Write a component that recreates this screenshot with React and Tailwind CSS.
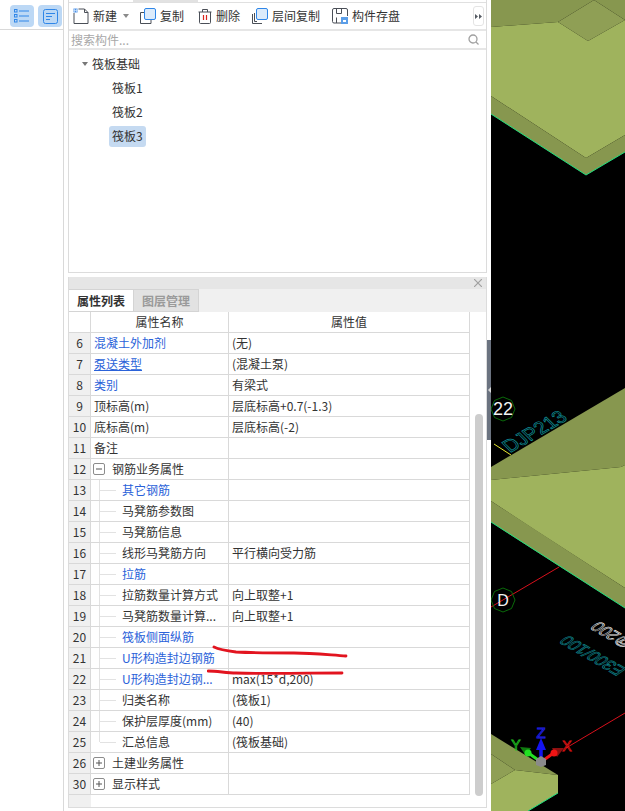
import React from 'react';

const ROWS = [
  { no: 6, name: '混凝土外加剂', value: '(无)', link: true },
  { no: 7, name: '泵送类型', value: '(混凝土泵)', link: true, underline: true },
  { no: 8, name: '类别', value: '有梁式', link: true },
  { no: 9, name: '顶标高(m)', value: '层底标高+0.7(-1.3)' },
  { no: 10, name: '底标高(m)', value: '层底标高(-2)' },
  { no: 11, name: '备注', value: '' },
  { no: 12, name: '钢筋业务属性', value: '', toggle: '-' },
  { no: 13, name: '其它钢筋', value: '', link: true, child: true },
  { no: 14, name: '马凳筋参数图', value: '', child: true },
  { no: 15, name: '马凳筋信息', value: '', child: true },
  { no: 16, name: '线形马凳筋方向', value: '平行横向受力筋', child: true },
  { no: 17, name: '拉筋', value: '', link: true, child: true },
  { no: 18, name: '拉筋数量计算方式', value: '向上取整+1', child: true },
  { no: 19, name: '马凳筋数量计算...', value: '向上取整+1', child: true },
  { no: 20, name: '筏板侧面纵筋', value: '', link: true, child: true },
  { no: 21, name: 'U形构造封边钢筋', value: '', link: true, child: true },
  { no: 22, name: 'U形构造封边钢...', value: 'max(15*d,200)', link: true, child: true },
  { no: 23, name: '归类名称', value: '(筏板1)', child: true },
  { no: 24, name: '保护层厚度(mm)', value: '(40)', child: true },
  { no: 25, name: '汇总信息', value: '(筏板基础)', child: true, last: true },
  { no: 26, name: '土建业务属性', value: '', toggle: '+' },
  { no: 30, name: '显示样式', value: '', toggle: '+' },
];

const ListIcon = () => (
  <svg width="16" height="14" viewBox="0 0 16 14" fill="none" stroke="#2f86e8" strokeWidth="1">
    <rect x="0.5" y="0.5" width="2.5" height="2.5" />
    <rect x="0.5" y="5.5" width="2.5" height="2.5" />
    <rect x="0.5" y="10.5" width="2.5" height="2.5" />
    <path d="M5 2h10M5 7h10M5 12h10" />
  </svg>
);

const FormIcon = () => (
  <svg width="15" height="15" viewBox="0 0 15 15" fill="none" stroke="#2f86e8" strokeWidth="1">
    <rect x="0.5" y="0.5" width="14" height="14" rx="2" />
    <path d="M3 4.5h9M3 7.5h6M3 10.5h4" />
  </svg>
);

const NewIcon = () => (
  <svg width="16" height="16" viewBox="0 0 16 16" fill="none">
    <path d="M1 5v10.5h14V4.5L11.5 1H5.5" stroke="#4a4f57" strokeWidth="1" />
    <path d="M11.5 1v3.5H15" stroke="#4a4f57" strokeWidth="1" />
    <rect x="0.5" y="0.5" width="4" height="4" fill="#4a90e8" />
    <path d="M1.5 0.5v4M3.5 0.5v4M0.5 2.5h4" stroke="#cfe2f8" strokeWidth="0.7" />
  </svg>
);

const CopyIcon = ({ small }) => (
  <svg width="16" height="16" viewBox="0 0 16 16" fill="none">
    {small && <path d="M0.5 6v9.5H10M2.5 5v8.5H5" stroke="#4a4f57" strokeWidth="1" />}
    {!small && <path d="M4 4.5H0.5v11h10.5V12" stroke="#4a4f57" strokeWidth="1" />}
    <rect x="4.5" y="0.5" width="11" height="11" rx="1.5" fill="#dcebfb" stroke="#2f86e8" strokeWidth="1" />
  </svg>
);

const TrashIcon = () => (
  <svg width="14" height="15" viewBox="0 0 14 15" fill="none">
    <path d="M0.5 3h13M4.5 3V0.5h5V3M1.5 3v10.5a1 1 0 0 0 1 1h9a1 1 0 0 0 1-1V3" stroke="#4a4f57" strokeWidth="1" />
    <path d="M5.5 6v5M8.5 6v5" stroke="#d9251d" strokeWidth="1.2" />
  </svg>
);

const SaveIcon = () => (
  <svg width="16" height="16" viewBox="0 0 16 16" fill="none">
    <path d="M9 15H2a1.500 1.500 0 0 1-1.500-1.500V2A1.500 1.500 0 0 1 2 .5h12A1.500 1.500 0 0 1 15.500 2v6" stroke="#4a4f57" strokeWidth="1" />
    <path d="M4.500 .5v5h5V.5M4.500 15V9.500" stroke="#4a4f57" strokeWidth="1" />
    <rect x="9" y="9" width="7" height="7" fill="#5b9ee8" />
    <rect x="11" y="12" width="3" height="2" fill="#ffffff" />
  </svg>
);

const ToolButton = ({ icon, label, className }) => (
  <div className={`flex items-center gap-[4px] ${className}`}>
    {icon}
    <span>{label}</span>
  </div>
);

const Toolbar = () => (
  <div className="flex h-[28px] items-center border-b-2 border-[#e6e6e6] pl-[4px] pr-[2px]">
    <ToolButton icon={<NewIcon />} label="新建" />
    <svg width="6" height="4" viewBox="0 0 6 4" className="ml-[6px]">
      <path d="M0 0h6L3 4z" fill="#8a8a8a" />
    </svg>
    <ToolButton icon={<CopyIcon />} label="复制" className="ml-[11px]" />
    <ToolButton icon={<TrashIcon />} label="删除" className="ml-[14px]" />
    <ToolButton icon={<CopyIcon small />} label="层间复制" className="ml-[12px]" />
    <ToolButton icon={<SaveIcon />} label="构件存盘" className="ml-[12px]" />
    <div className="ml-auto flex h-[20px] w-[11px] items-center justify-center rounded-[3px] border border-[#e4e4e4]">
      <svg width="7" height="5" viewBox="0 0 7 5">
        <path d="M0 0l3 2.500L0 5zM4 0l3 2.500L4 5z" fill="#555b63" />
      </svg>
    </div>
  </div>
);

const SearchBar = () => (
  <div className="flex h-[19px] items-center justify-between border-b-2 border-[#e6e6e6] pl-[2px] pr-[7px] text-[#a8a8a8]">
    <span>搜索构件...</span>
    <svg width="11" height="11" viewBox="0 0 11 11" fill="none" stroke="#a0a0a0" strokeWidth="1.300">
      <circle cx="5" cy="5" r="4" />
      <path d="M8 8l2.500 2.500" />
    </svg>
  </div>
);

const TreeItem = ({ label, selected }) => (
  <div className="flex h-[24px] items-center pl-[40px]">
    <span className={`flex h-[21px] items-center rounded-[3px] px-[3px] ${selected ? 'bg-[#c5daf1]' : ''}`}>{label}</span>
  </div>
);

const ComponentTree = () => (
  <div className="pt-[2px]">
    <div className="flex h-[24px] items-center pl-[13px]">
      <svg width="6" height="4" viewBox="0 0 6 4" className="mr-[4px]">
        <path d="M0 0h6L3 4z" fill="#777777" />
      </svg>
      <span>筏板基础</span>
    </div>
    <TreeItem label="筏板1" />
    <TreeItem label="筏板2" />
    <TreeItem label="筏板3" selected />
  </div>
);

const NameCell = ({ row }) => {
  const color = row.link ? 'text-[#2a62d9]' : 'text-[#333333]';
  const deco = row.underline ? 'underline' : '';
  return (
    <div className={`flex w-[138px] items-center border-r border-[#d9d9d9] ${color}`}>
      {row.child && (
        <>
          <span className={`ml-[8px] w-px bg-[#e2e2e2] ${row.last ? 'h-[10px] self-start' : 'self-stretch'}`} />
          <span className="h-px w-[16px] bg-[#e2e2e2]" />
          <span className={`ml-[6px] whitespace-nowrap ${deco}`}>{row.name}</span>
        </>
      )}
      {row.toggle && (
        <>
          <span className="ml-[2px] flex h-[12px] w-[12px] items-center justify-center rounded-[2px] border border-[#8c8c8c]">
            <svg width="6" height="6" viewBox="0 0 6 6" stroke="#555555" strokeWidth="1">
              <path d="M0 3h6" />
              {row.toggle === '+' && <path d="M3 0v6" />}
            </svg>
          </span>
          <span className="ml-[7px] whitespace-nowrap">{row.name}</span>
        </>
      )}
      {!row.child && !row.toggle && <span className={`ml-[3px] whitespace-nowrap ${deco}`}>{row.name}</span>}
    </div>
  );
};

const PropertyRow = ({ row }) => (
  <div className="flex h-[21px] border-b border-[#d9d9d9]">
    <div className="flex w-[22px] items-center justify-center border-r border-[#d9d9d9] bg-[#f0f0f0]">{row.no}</div>
    <NameCell row={row} />
    <div className="flex w-[241px] items-center whitespace-nowrap border-r border-[#d9d9d9] pl-[3px]">{row.value}</div>
  </div>
);

const PropertyTable = () => (
  <div className="relative flex min-h-0 flex-1">
    <div className="flex w-[401px] flex-col">
      <div className="flex h-[21px] border-b border-[#d9d9d9]">
        <div className="w-[22px] border-r border-[#d9d9d9]" />
        <div className="flex w-[138px] items-center justify-center border-r border-[#d9d9d9]">属性名称</div>
        <div className="flex w-[241px] items-center justify-center border-r border-[#d9d9d9]">属性值</div>
      </div>
      {ROWS.map((row) => (
        <PropertyRow key={row.no} row={row} />
      ))}
      <div className="w-[22px] flex-1 bg-[#f0f0f0]" />
    </div>
    <div className="flex flex-1 flex-col pl-[5px] pr-[3px] pt-[102px] pb-[11px]">
      <div className="w-[8px] flex-1 rounded-full bg-[#cdcdcd]" />
    </div>
    {/* hand-drawn red marks over rows 20-22 */}
    <svg className="absolute left-[138px] top-[333px] pointer-events-none" width="145" height="32" viewBox="207 645 145 32" fill="none" stroke="#e2141f" strokeWidth="2.800" strokeLinecap="round">
      <path d="M214 647c6 3 14 4 22 5 20 1 40 1 58 1 18 0 36 2 52 3" />
      <path d="M208 671c10 0 18 2 28 2 36 1 72 0 106 0" />
    </svg>
  </div>
);

const Viewport = () => (
  <svg className="h-full w-full" viewBox="491 0 134 811" preserveAspectRatio="none">
    <rect x="491" y="0" width="134" height="811" fill="#000000" />

    {/* first slab */}
    <polygon points="491,0 594,0 558,22 491,27" fill="#87974f" />
    <polygon points="594,0 625,0 625,20" fill="#87974f" />
    <polygon points="558,22 594,0 625,20 588,41" fill="#8f9f55" />
    <polygon points="491,27 558,22 588,41 625,20 625,135 586,158 491,96" fill="#9fb35d" />
    <polygon points="491,96 586,158 625,135 625,152 586,175 491,114" fill="#87974f" />
    <polyline points="491,114 586,175 625,152" fill="none" stroke="#1fe07f" strokeWidth="1" />

    {/* annotations above the second slab */}
    <line x1="494" y1="444" x2="511" y2="455" stroke="#e8e830" strokeWidth="1" />
    <text transform="translate(510 453) rotate(-30) skewX(15)" fontFamily="'Liberation Sans', sans-serif" fontSize="19" fill="none" stroke="#0f8f96" strokeWidth="0.700">DJP213</text>

    {/* second slab */}
    <polygon points="491,467 625,388 625,465 621,467 491,480" fill="#87974f" />
    <polygon points="491,480 621,467 625,465 625,588 535,530 491,501" fill="#9fb35d" />
    <polygon points="491,501 625,588 625,608 503,530 491,522" fill="#87974f" />
    <line x1="491" y1="522" x2="625" y2="608" stroke="#1fe07f" strokeWidth="1" />

    {/* grid axis */}
    <line x1="559" y1="567" x2="491" y2="607" stroke="#d8101c" strokeWidth="1" />
    <line x1="625" y1="713" x2="566" y2="748" stroke="#d8101c" strokeWidth="1" />

    <polygon points="503,397 511.500,400.500 515,409 511.500,417.500 503,421 494.500,417.500 491,409 494.500,400.500" fill="#000000" stroke="#0a6a0a" strokeWidth="1" />
    <text x="503" y="415" textAnchor="middle" fontFamily="'Liberation Sans', sans-serif" fontSize="18" fill="#f2f2f2">22</text>
    <polygon points="503,588 511.500,591.500 515,600 511.500,608.500 503,612 494.500,608.500 491,600 494.500,591.500" fill="none" stroke="#0a6a0a" strokeWidth="1" />
    <text x="503" y="606" textAnchor="middle" fontFamily="'Liberation Sans', sans-serif" fontSize="16" fill="#f2f2f2">D</text>

    {/* rebar labels, upside down along the slab */}
    <text transform="translate(599 621) rotate(210) skewX(-25)" textAnchor="end" fontFamily="'Liberation Sans', sans-serif" fontSize="16" fill="none" stroke="#f0f0f0" strokeWidth="0.600">C20@200</text>
    <text transform="translate(568 635) rotate(210) skewX(-25)" textAnchor="end" fontFamily="'Liberation Sans', sans-serif" fontSize="16" fill="none" stroke="#0e7f86" strokeWidth="0.700">E300/100</text>

    {/* corner slab */}
    <polygon points="491,734 558,775 515,770 491,754" fill="#87974f" />
    <polygon points="491,754 515,770 491,784" fill="#8f9f55" />
    <polygon points="491,784 515,770 558,775 558,793 528,811 491,811" fill="#9fb35d" />
    <line x1="558" y1="793" x2="528" y2="811" stroke="#1fe07f" strokeWidth="1" />

    {/* axis gizmo */}
    <line x1="541" y1="762" x2="527" y2="752" stroke="#22e022" strokeWidth="3" />
    <polygon points="520,747 531,748 526,756" fill="#0f7a0f" />
    <circle cx="528" cy="753" r="3.500" fill="#22e022" />
    <line x1="541" y1="762" x2="555" y2="752" stroke="#f01414" strokeWidth="3" />
    <polygon points="564,748 552,748 557,757" fill="#8a1010" />
    <circle cx="554" cy="753" r="3.500" fill="#f01414" />
    <line x1="541" y1="762" x2="541" y2="745" stroke="#1414f0" strokeWidth="3.500" />
    <polygon points="541,738 546,750 536,750" fill="#1414f0" />
    <polygon points="541,756 546,759 546,765 541,767 536,765 536,759" fill="#8a8a8a" />
    <text x="541" y="738" textAnchor="middle" fontFamily="'Liberation Sans', sans-serif" fontSize="15" fill="none" stroke="#2020f0" strokeWidth="0.800">Z</text>
    <text x="516" y="750" textAnchor="middle" fontFamily="'Liberation Sans', sans-serif" fontSize="14" fill="none" stroke="#22c022" strokeWidth="0.800">Y</text>
    <text x="567" y="751" textAnchor="middle" fontFamily="'Liberation Sans', sans-serif" fontSize="14" fill="none" stroke="#e01414" strokeWidth="0.800">X</text>
  </svg>
);

export default function App() {
  return (
    <div className="flex h-[811px] w-[625px] overflow-hidden bg-white text-[12px] leading-none text-[#333333] [font-family:'Noto_Sans_CJK_SC','Liberation_Sans',sans-serif]">
      {/* far left mode switch */}
      <div className="w-[64px] shrink-0 border-r border-[#d9d9d9]">
        <div className="flex h-[30px] items-start gap-[4px] border-b border-[#d9d9d9] pl-[10px] pt-[5px]">
          <div className="flex h-[22px] w-[24px] items-center justify-center rounded-[4px] bg-[#bcd8f5]"><ListIcon /></div>
          <div className="flex h-[22px] w-[24px] items-center justify-center rounded-[4px] bg-[#bcd8f5]"><FormIcon /></div>
        </div>
      </div>

      <div className="ml-[4px] flex w-[419px] shrink-0 flex-col">
        {/* component list */}
        <div className="h-[273px] border-x border-b border-[#dcdcdc]">
          <div className="flex h-[3px] border-b border-[#e0e0e0]">
            <div className="ml-[64px] w-[65px] bg-[#e2e2e2]" />
          </div>
          <Toolbar />
          <SearchBar />
          <ComponentTree />
        </div>

        {/* property panel */}
        <div className="mt-[4px] flex h-[531px] flex-col border-x border-b border-[#dcdcdc]">
          <div className="flex h-[12px] items-center justify-end bg-[#e6e6e6] pr-[4px]">
            <svg width="8" height="8" viewBox="0 0 8 8" stroke="#a0a0a0" strokeWidth="1.200">
              <path d="M0 0l8 8M8 0L0 8" />
            </svg>
          </div>
          <div className="flex h-[23px] bg-[#f0f0f0] font-bold">
            <div className="flex w-[65px] items-center justify-center border-y border-r border-[#d4d4d4] bg-white">属性列表</div>
            <div className="flex w-[65px] items-center justify-center border-y border-r border-[#d4d4d4] bg-[#e2e2e2] text-[#9a9a9a]">图层管理</div>
          </div>
          <PropertyTable />
        </div>
      </div>

      {/* splitter handle */}
      <div className="flex w-[4px] shrink-0 flex-col pt-[340px]">
        <div className="flex h-[100px] items-center justify-center bg-[#6b7380]">
          <svg width="3" height="6" viewBox="0 0 3 6"><path d="M3 0v6L0 3z" fill="#d8d8d8" /></svg>
        </div>
      </div>

      <div className="min-w-0 flex-1">
        <Viewport />
      </div>
    </div>
  );
}
